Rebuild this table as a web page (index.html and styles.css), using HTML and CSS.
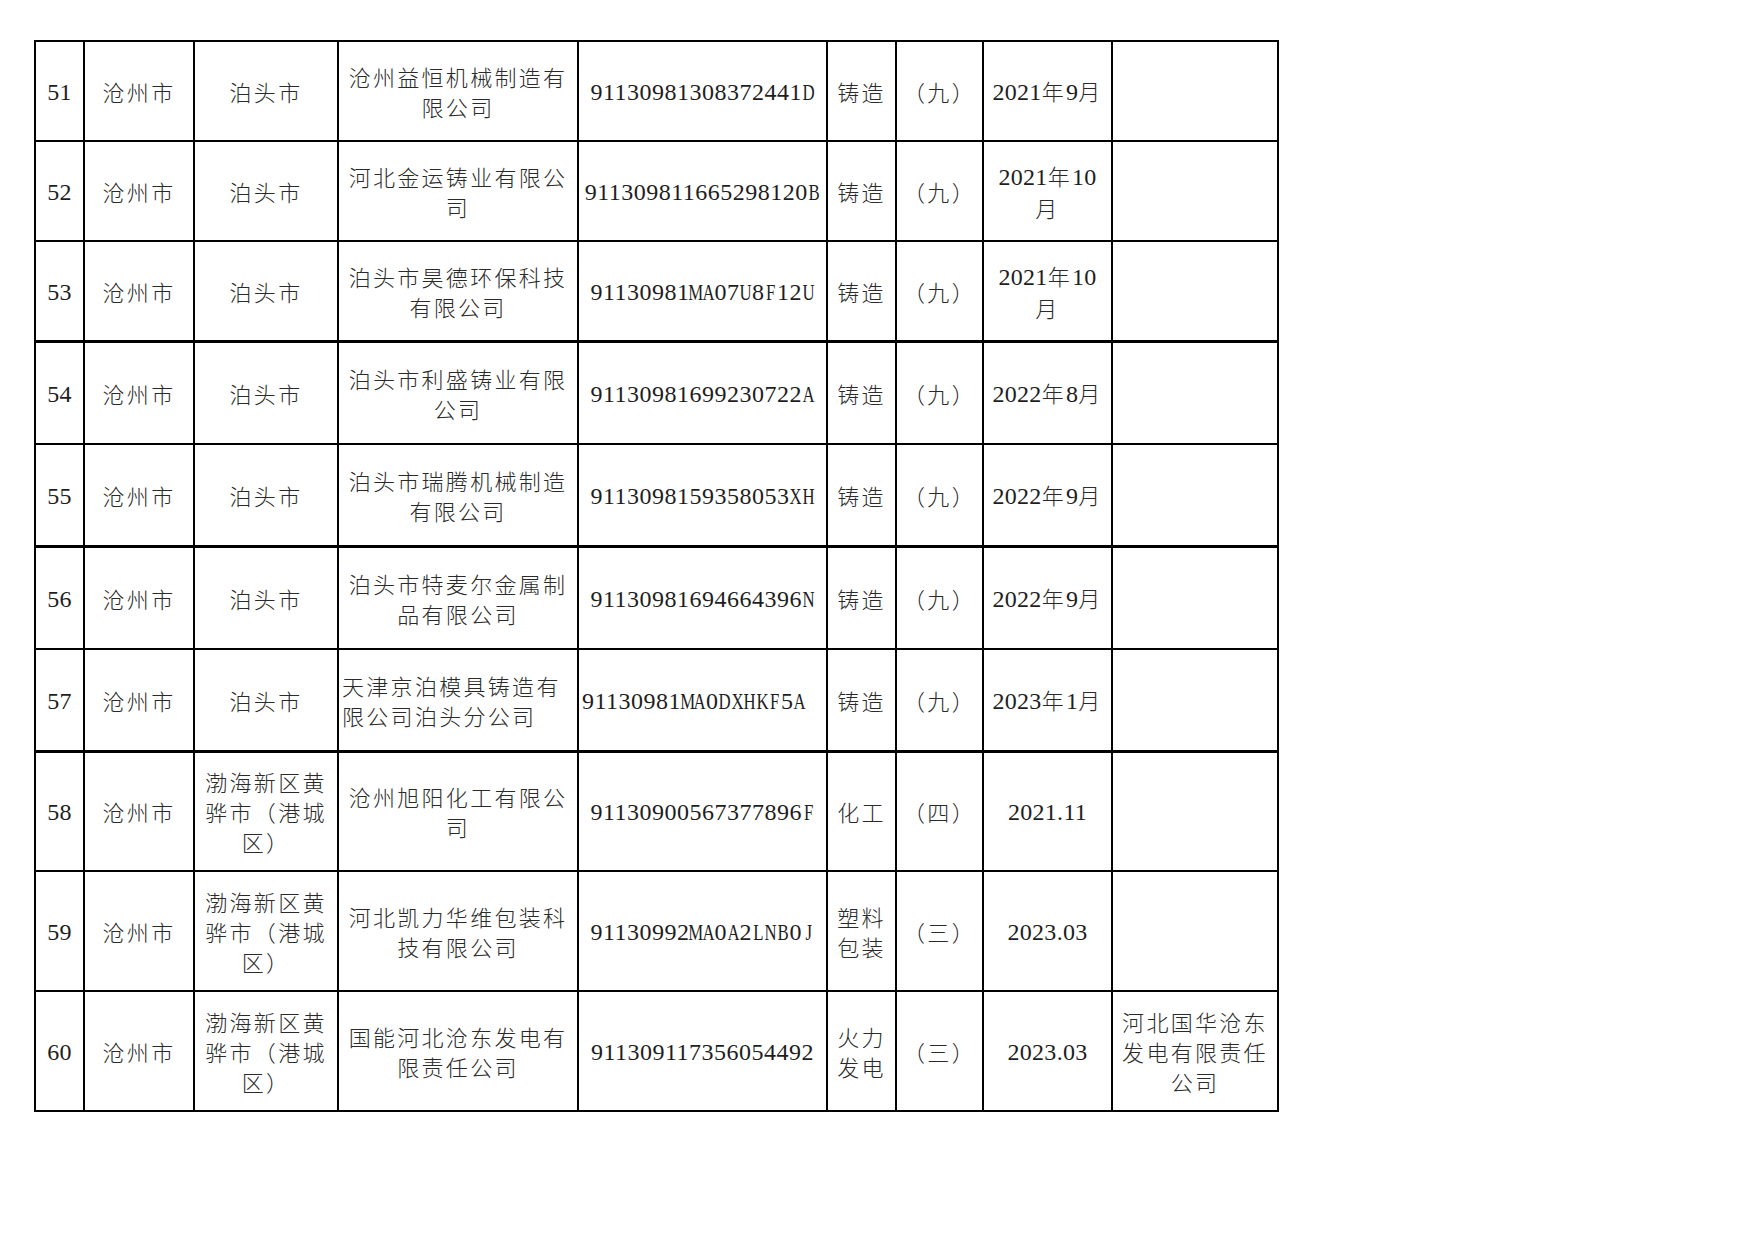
FILE: index.html
```html
<!DOCTYPE html>
<html lang="zh-CN">
<head>
<meta charset="utf-8">
<title>名单</title>
<link rel="stylesheet" href="styles.css">
</head>
<body>
<table class="list">
  <colgroup>
    <col class="c-seq"><col class="c-city"><col class="c-dist"><col class="c-name"><col class="c-code"><col class="c-ind"><col class="c-lvl"><col class="c-date"><col class="c-note">
  </colgroup>
  <tbody>
    <tr class="r-std">
      <td><span class="n">51</span></td><td>沧州市</td><td>泊头市</td><td>沧州益恒机械制造有限公司</td>
      <td class="code"><span class="n">91130981308372441<span class="ch"><span>D</span></span></span></td><td>铸造</td><td>（九）</td>
      <td><span class="n">2021</span>年<span class="n">9</span>月</td><td></td>
    </tr>
    <tr class="r-std">
      <td><span class="n">52</span></td><td>沧州市</td><td>泊头市</td><td>河北金运铸业有限公司</td>
      <td class="code"><span class="n">911309811665298120<span class="ch"><span>B</span></span></span></td><td>铸造</td><td>（九）</td>
      <td><span class="n">2021</span>年<span class="n">10</span>月</td><td></td>
    </tr>
    <tr class="r-std">
      <td><span class="n">53</span></td><td>沧州市</td><td>泊头市</td><td>泊头市昊德环保科技有限公司</td>
      <td class="code"><span class="n">91130981<span class="ch"><span>M</span></span><span class="ch"><span>A</span></span>07<span class="ch"><span>U</span></span>8<span class="ch"><span>F</span></span>12<span class="ch"><span>U</span></span></span></td><td>铸造</td><td>（九）</td>
      <td><span class="n">2021</span>年<span class="n">10</span>月</td><td></td>
    </tr>
    <tr class="r-mid thick">
      <td><span class="n">54</span></td><td>沧州市</td><td>泊头市</td><td>泊头市利盛铸业有限公司</td>
      <td class="code"><span class="n">91130981699230722<span class="ch"><span>A</span></span></span></td><td>铸造</td><td>（九）</td>
      <td><span class="n">2022</span>年<span class="n">8</span>月</td><td></td>
    </tr>
    <tr class="r-mid2">
      <td><span class="n">55</span></td><td>沧州市</td><td>泊头市</td><td>泊头市瑞腾机械制造有限公司</td>
      <td class="code"><span class="n">9113098159358053<span class="ch"><span>X</span></span><span class="ch"><span>H</span></span></span></td><td>铸造</td><td>（九）</td>
      <td><span class="n">2022</span>年<span class="n">9</span>月</td><td></td>
    </tr>
    <tr class="r-mid thick">
      <td><span class="n">56</span></td><td>沧州市</td><td>泊头市</td><td>泊头市特麦尔金属制品有限公司</td>
      <td class="code"><span class="n">91130981694664396<span class="ch"><span>N</span></span></span></td><td>铸造</td><td>（九）</td>
      <td><span class="n">2022</span>年<span class="n">9</span>月</td><td></td>
    </tr>
    <tr class="r-mid2">
      <td><span class="n">57</span></td><td>沧州市</td><td>泊头市</td><td class="left">天津京泊模具铸造有限公司泊头分公司</td>
      <td class="code left"><span class="n">91130981<span class="ch"><span>M</span></span><span class="ch"><span>A</span></span>0<span class="ch"><span>D</span></span><span class="ch"><span>X</span></span><span class="ch"><span>H</span></span><span class="ch"><span>K</span></span><span class="ch"><span>F</span></span>5<span class="ch"><span>A</span></span></span></td><td>铸造</td><td>（九）</td>
      <td><span class="n">2023</span>年<span class="n">1</span>月</td><td></td>
    </tr>
    <tr class="r-tall thick">
      <td><span class="n">58</span></td><td>沧州市</td><td>渤海新区黄骅市（港城区）</td><td>沧州旭阳化工有限公司</td>
      <td class="code"><span class="n">91130900567377896<span class="ch"><span>F</span></span></span></td><td>化工</td><td>（四）</td>
      <td><span class="n">2021.11</span></td><td></td>
    </tr>
    <tr class="r-tall">
      <td><span class="n">59</span></td><td>沧州市</td><td>渤海新区黄骅市（港城区）</td><td>河北凯力华维包装科技有限公司</td>
      <td class="code"><span class="n">91130992<span class="ch"><span>M</span></span><span class="ch"><span>A</span></span>0<span class="ch"><span>A</span></span>2<span class="ch"><span>L</span></span><span class="ch"><span>N</span></span><span class="ch"><span>B</span></span>0<span class="ch"><span>J</span></span></span></td><td>塑料包装</td><td>（三）</td>
      <td><span class="n">2023.03</span></td><td></td>
    </tr>
    <tr class="r-tall">
      <td><span class="n">60</span></td><td>沧州市</td><td>渤海新区黄骅市（港城区）</td><td>国能河北沧东发电有限责任公司</td>
      <td class="code"><span class="n">911309117356054492</span></td><td>火力发电</td><td>（三）</td>
      <td><span class="n">2023.03</span></td><td>河北国华沧东发电有限责任公司</td>
    </tr>
  </tbody>
</table>
</body>
</html>
```

FILE: styles.css
```css
html, body {
  margin: 0;
  padding: 0;
  background: #ffffff;
}

body {
  width: 1754px;
  height: 1241px;
  overflow: hidden;
}

.list {
  margin: 40px 0 0 34px;
  border-collapse: collapse;
  table-layout: fixed;
  width: 1243px;
  border: 2px solid #000;
  font-family: "Noto Sans CJK SC", "Liberation Serif", sans-serif;
  font-size: 22px;
  font-weight: 300;
  letter-spacing: 2.3px;
  line-height: 30px;
  color: #2a2a2a;
}

.c-seq { width: 49px; }
.c-city { width: 110px; }
.c-dist { width: 144px; }
.c-name { width: 240px; }
.c-code { width: 249px; }
.c-ind { width: 69px; }
.c-lvl { width: 87px; }
.c-date { width: 129px; }
.c-note { width: 166px; }

.list td {
  border: 2px solid #000;
  padding: 0 4px;
  text-align: center;
  vertical-align: middle;
}

.r-std { height: 100px; }
.r-mid { height: 103px; }
.r-mid2 { height: 102px; }
.r-tall { height: 120px; }

.thick td {
  border-top-width: 3px;
}

.list td.left {
  text-align: left;
  padding-left: 3px;
}

.list td.code {
  white-space: nowrap;
}

.n {
  font-family: "Liberation Serif", serif;
  font-size: 24px;
  font-weight: 400;
  letter-spacing: 0.3px;
  color: #1e1e1e;
}

.code .n {
  letter-spacing: 0.5px;
}

.ch {
  display: inline-flex;
  justify-content: center;
  width: 12.5px;
  letter-spacing: 0;
  vertical-align: baseline;
}

.ch > span {
  display: inline-block;
  transform: scaleX(0.7);
}
```
